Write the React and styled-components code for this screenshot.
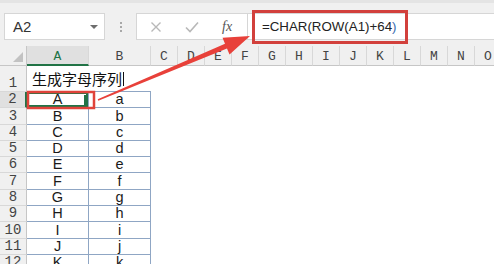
import React from "react";
import styled, { createGlobalStyle } from "styled-components";

const Global = createGlobalStyle`
  html, body { margin: 0; padding: 0; background: #ffffff; overflow: hidden; }
  #root { width: 494px; height: 264px; position: relative; overflow: hidden; }
`;

const Page = styled.div`
  position: relative;
  width: 494px;
  height: 264px;
  overflow: hidden;
  display: flex;
  flex-direction: column;
  background: #fff;
  font-family: "Liberation Sans", Arial, sans-serif;
`;

const TopBar = styled.div`
  flex-shrink: 0;
  height: 46px;
  box-sizing: border-box;
  background: #f0f0f0;
  border-top: 3px solid #e4e4e4;
  padding-top: 10px;
  display: flex;
  align-items: flex-start;
`;

const NameBox = styled.div`
  margin-left: 4px;
  width: 101px;
  height: 27px;
  box-sizing: border-box;
  background: #fff;
  border: 1px solid #d6d6d6;
  display: flex;
  align-items: center;
  justify-content: space-between;
  padding: 0 6px 0 8px;
  font-size: 15px;
  color: #333;
`;

const DropTri = styled.span`
  width: 0;
  height: 0;
  border-left: 4px solid transparent;
  border-right: 4px solid transparent;
  border-top: 4px solid #6d6d6d;
`;

const Grip = styled.div`
  width: 31px;
  height: 27px;
  display: flex;
  flex-direction: column;
  align-items: center;
  justify-content: center;
  gap: 2px;
  & > span { width: 2px; height: 2px; background: #a8a8a8; }
`;

const FormulaBox = styled.div`
  flex: 1;
  height: 27px;
  box-sizing: border-box;
  background: #fff;
  border: 1px solid #d6d6d6;
  border-right: none;
  display: flex;
  align-items: center;
`;

const FxArea = styled.div`
  width: 111px;
  height: 100%;
  display: flex;
  align-items: center;
  border-right: 1px solid #d6d6d6;
  padding-left: 13px;
  box-sizing: border-box;
  gap: 23px;
`;

const Fx = styled.span`
  font-family: "Liberation Serif", serif;
  font-style: italic;
  font-size: 14px;
  color: #555;
`;

const FormulaText = styled.div`
  padding-left: 14px;
  font-size: 13.3px;
  color: #222;
`;

const Paren = styled.span`
  color: ${(p) => p.$c};
`;

const Grid = styled.div`
  flex-shrink: 0;
  display: grid;
  grid-template-columns: 27px 62px 62px repeat(13, 27px);
  grid-template-rows: 20px 26px repeat(11, 16.3px);
`;

const Corner = styled.div`
  background: #f0f0f0;
  border-right: 1px solid #c6c6c6;
  border-bottom: 1px solid #c6c6c6;
  position: relative;
  &::after {
    content: "";
    position: absolute;
    right: 3px;
    bottom: 3px;
    border-left: 10px solid transparent;
    border-bottom: 10px solid #c2c2c2;
  }
`;

const ColHead = styled.div`
  background: ${(p) => (p.$active ? "#e0e0e0" : "#f0f0f0")};
  border-right: 1px solid #d8d8d8;
  border-bottom: ${(p) => (p.$active ? "2px solid #217346" : "1px solid #c6c6c6")};
  color: ${(p) => (p.$active ? "#217346" : "#444")};
  font-family: "Liberation Mono", monospace;
  font-size: 13px;
  display: flex;
  align-items: center;
  justify-content: center;
  padding-top: 2px;
  box-sizing: border-box;
`;

const RowHead = styled.div`
  background: ${(p) => (p.$active ? "#e0e0e0" : "#f0f0f0")};
  border-right: ${(p) => (p.$active ? "2px solid #217346" : "1px solid #c6c6c6")};
  border-bottom: 1px solid #d8d8d8;
  color: #444;
  font-family: "Liberation Mono", monospace;
  font-size: 14px;
  display: flex;
  align-items: flex-end;
  justify-content: center;
  box-sizing: border-box;
  line-height: 15px;
`;

const Cell = styled.div`
  box-sizing: border-box;
  border-right: ${(p) => (p.$lined ? "1px solid #8fa6c4" : "none")};
  border-bottom: ${(p) => (p.$lined ? "1px solid #8fa6c4" : "none")};
  display: flex;
  align-items: flex-end;
  justify-content: center;
  font-size: 14.5px;
  line-height: 15px;
  color: #1a1a1a;
  position: relative;
`;

const TitleCell = styled.div`
  grid-column: 2 / span 2;
  box-sizing: border-box;
  border-bottom: 1px solid #8fa6c4;
  display: flex;
  align-items: flex-end;
  padding: 0 0 2px 5px;
  font-family: "Noto Sans CJK SC", sans-serif;
  font-size: 15px;
  line-height: 20px;
  color: #111;
`;

const Caret = styled.span`
  display: inline-block;
  width: 1px;
  height: 14px;
  background: #111;
  margin: 0 0 3px 1px;
`;

const Selected = styled(Cell)`
  box-shadow: inset 0 0 0 2px #217346;
`;

const FillHandle = styled.span`
  position: absolute;
  right: 1px;
  bottom: 2px;
  width: 3px;
  height: 10px;
  background: #217346;
`;

const Overlay = styled.svg`
  position: absolute;
  left: 0;
  top: 0;
  pointer-events: none;
`;

const cols = ["A", "B", "C", "D", "E", "F", "G", "H", "I", "J", "K", "L", "M", "N", "O"];
const upper = "ABCDEFGHIJK".split("");

export default function App() {
  return (
    <>
      <Global />
      <Page>
        <TopBar>
          <NameBox>
            <span>A2</span>
            <DropTri />
          </NameBox>
          <Grip>
            <span />
            <span />
            <span />
          </Grip>
          <FormulaBox>
            <FxArea>
              <svg width="12" height="12" viewBox="0 0 12 12">
                <path d="M1.5 1.5 L10.5 10.5 M10.5 1.5 L1.5 10.5" stroke="#b8b8b8" strokeWidth="1.4" fill="none" />
              </svg>
              <svg width="14" height="12" viewBox="0 0 14 12">
                <path d="M1 6.5 L5 10.5 L13 1.5" stroke="#b8b8b8" strokeWidth="1.6" fill="none" />
              </svg>
              <Fx>fx</Fx>
            </FxArea>
            <FormulaText>
              =CHAR(ROW(A1)+64<Paren $c="#3a6db0">)</Paren>
            </FormulaText>
          </FormulaBox>
        </TopBar>
        <Grid>
          <Corner />
          {cols.map((c, i) => (
            <ColHead key={c} $active={i === 0}>{c}</ColHead>
          ))}
          <RowHead>1</RowHead>
          <TitleCell>
            生成字母序列<Caret />
          </TitleCell>
          {cols.slice(2).map((c) => (
            <Cell key={"r1" + c} />
          ))}
          {upper.map((L, r) => (
            <React.Fragment key={L}>
              <RowHead $active={r === 0}>{r + 2}</RowHead>
              {r === 0 ? (
                <Selected $lined>
                  {L}
                  <FillHandle />
                </Selected>
              ) : (
                <Cell $lined>{L}</Cell>
              )}
              <Cell $lined>{L.toLowerCase()}</Cell>
              {cols.slice(2).map((c) => (
                <Cell key={c + r} />
              ))}
            </React.Fragment>
          ))}
        </Grid>
        <Overlay width="494" height="264" viewBox="0 0 494 264">
          <rect x="253.5" y="11.5" width="153" height="31" fill="none" stroke="#d2403c" strokeWidth="3" />
          <rect x="28" y="92" width="66" height="16" fill="none" stroke="#e0433b" strokeWidth="2.5" />
          <polygon
            points="98.3,100.7 227,48.4 229.5,54.4 250,36 222.5,37.8 225,43.8 97.7,99.3"
            fill="#e8413a"
          />
        </Overlay>
      </Page>
    </>
  );
}
